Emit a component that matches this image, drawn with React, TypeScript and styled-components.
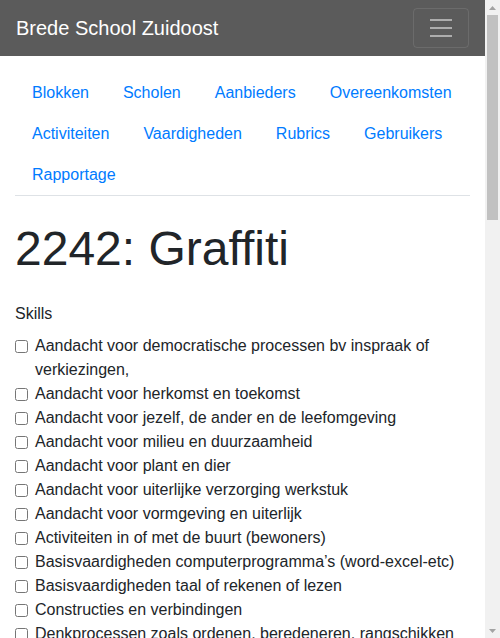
import React from 'react';
import styled, { createGlobalStyle } from 'styled-components';

const GlobalStyle = createGlobalStyle`
  * {
    box-sizing: border-box;
  }
  body {
    margin: 0;
    font-family: "Liberation Sans", Arial, sans-serif;
    font-size: 16px;
    line-height: 1.5;
    color: #212529;
    background: #ffffff;
  }
`;

const Shell = styled.div`
  display: flex;
  align-items: flex-start;
`;

const Content = styled.div`
  flex: 1;
  min-width: 0;
`;

// the browser's classic scrollbar, drawn as a sticky rail at the right
const ScrollRail = styled.div`
  position: sticky;
  top: 0;
  flex: none;
  display: flex;
  flex-direction: column;
  width: 15px;
  height: 100vh;
  background: #f1f1f1;
`;

const ScrollButton = styled.div`
  display: flex;
  align-items: center;
  justify-content: center;
  height: 15px;
`;

const ScrollThumb = styled.div`
  height: 205px;
  margin: 0 2px;
  background: #c1c1c1;
`;

const ScrollSpace = styled.div`
  flex: 1;
`;

const Navbar = styled.nav`
  display: flex;
  align-items: center;
  justify-content: space-between;
  padding: 8px 16px;
  background: #5b5b5b;
`;

const Brand = styled.a`
  font-size: 20px;
  line-height: 30px;
  color: #ffffff;
  text-decoration: none;
`;

const Toggler = styled.button`
  display: flex;
  align-items: center;
  justify-content: center;
  width: 56px;
  height: 40px;
  padding: 4px 12px;
  background: transparent;
  border: 1px solid rgba(255, 255, 255, 0.1);
  border-radius: 4px;
`;

const Container = styled.main`
  padding: 0 15px;
`;

const NavList = styled.ul`
  display: flex;
  flex-wrap: wrap;
  list-style: none;
  margin: 16px 0 0;
  padding: 0;
  border-bottom: 1px solid #dee2e6;
`;

const NavLink = styled.a`
  display: block;
  padding: 8.5px 17px;
  color: #007bff;
  text-decoration: none;
`;

const Title = styled.h1`
  margin: 24px 0 24px;
  font-size: 48px;
  font-weight: 400;
  line-height: 1.2;
`;

const GroupLabel = styled.div`
  margin-bottom: 8px;
`;

const CheckRow = styled.label`
  display: grid;
  grid-template-columns: 20px 1fr;
  align-items: start;
`;

const Box = styled.input`
  width: 13px;
  height: 13px;
  margin: 6px 0 0;
`;

const navItems = [
  'Blokken',
  'Scholen',
  'Aanbieders',
  'Overeenkomsten',
  'Activiteiten',
  'Vaardigheden',
  'Rubrics',
  'Gebruikers',
  'Rapportage',
];

const skills = [
  'Aandacht voor democratische processen bv inspraak of verkiezingen,',
  'Aandacht voor herkomst en toekomst',
  'Aandacht voor jezelf, de ander en de leefomgeving',
  'Aandacht voor milieu en duurzaamheid',
  'Aandacht voor plant en dier',
  'Aandacht voor uiterlijke verzorging werkstuk',
  'Aandacht voor vormgeving en uiterlijk',
  'Activiteiten in of met de buurt (bewoners)',
  'Basisvaardigheden computerprogramma’s (word-excel-etc)',
  'Basisvaardigheden taal of rekenen of lezen',
  'Constructies en verbindingen',
  'Denkprocessen zoals ordenen, beredeneren, rangschikken',
  'Doelgericht werken',
  'Doorzetten en volhouden',
  'Eigen ideeën uitwerken',
  'Emoties herkennen en benoemen',
  'Experimenteren met materialen',
  'Fantasie en verbeelding gebruiken',
  'Feedback geven en ontvangen',
  'Fijne motoriek',
  'Gebruik van gereedschap',
  'Gezonde leefstijl',
  'Grove motoriek',
  'Hulp vragen en geven',
  'Improviseren',
  'Informatie opzoeken en verwerken',
  'Initiatief nemen',
  'Kennis van cultuur en erfgoed',
  'Kennis van techniek',
  'Kritisch denken',
  'Luisteren naar anderen',
  'Mediawijsheid',
  'Meningen vormen en verwoorden',
  'Muzikaal gevoel en ritme',
  'Nauwkeurig werken',
  'Nieuwsgierigheid en onderzoekende houding',
  'Omgaan met regels en afspraken',
  'Omgaan met winnen en verliezen',
  'Onderzoeken en ontdekken',
  'Ontwerpen en maken',
  'Plannen en organiseren',
  'Presenteren voor een groep',
  'Probleemoplossend vermogen',
  'Reflecteren op eigen werk',
  'Respect voor elkaar',
  'Ruimtelijk inzicht',
  'Samenwerken',
  'Sociale vaardigheden',
  'Spelregels begrijpen en toepassen',
  'Sportiviteit en fair play',
  'Taalvaardigheid en woordenschat',
  'Tekenen en schilderen',
  'Uitdrukken in beweging en dans',
  'Veiligheid en verantwoordelijkheid',
  'Verhalen vertellen',
  'Vertrouwen in eigen kunnen',
  'Waarnemen en beschrijven',
  'Weerbaarheid',
  'Zelfkennis',
  'Zelfstandig werken',
  'Zelfvertrouwen',
  'Zorg voor de omgeving',
  'Zorg voor dieren',
  'Zorgvuldig omgaan met materialen',
];

function TogglerIcon() {
  return (
    <svg width="30" height="30" viewBox="0 0 30 30">
      <path
        stroke="rgba(255, 255, 255, 0.5)"
        strokeWidth="2"
        d="M4 7h22M4 15h22M4 23h22"
      />
    </svg>
  );
}

function Arrow({ down }: { down?: boolean }) {
  return (
    <svg width="7" height="4" viewBox="0 0 7 4">
      <path fill="#a3a3a3" d={down ? 'M0 0h7L3.5 4z' : 'M3.5 0L7 4H0z'} />
    </svg>
  );
}

export default function App() {
  return (
    <Shell>
      <GlobalStyle />
      <Content>
        <Navbar>
          <Brand href="#">Brede School Zuidoost</Brand>
          <Toggler aria-label="Menu">
            <TogglerIcon />
          </Toggler>
        </Navbar>
        <Container>
          <NavList>
            {navItems.map((item) => (
              <li key={item}>
                <NavLink href="#">{item}</NavLink>
              </li>
            ))}
          </NavList>
          <Title>2242: Graffiti</Title>
          <GroupLabel>Skills</GroupLabel>
          {skills.map((skill) => (
            <CheckRow key={skill}>
              <Box type="checkbox" />
              <span>{skill}</span>
            </CheckRow>
          ))}
        </Container>
      </Content>
      <ScrollRail>
        <ScrollButton>
          <Arrow />
        </ScrollButton>
        <ScrollThumb />
        <ScrollSpace />
        <ScrollButton>
          <Arrow down />
        </ScrollButton>
      </ScrollRail>
    </Shell>
  );
}
